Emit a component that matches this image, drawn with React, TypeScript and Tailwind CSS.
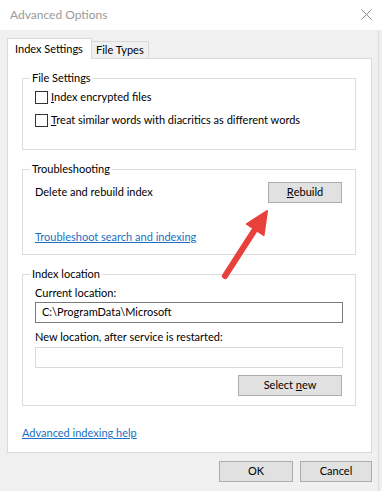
import React from 'react';

const font = "font-['Lato','Open_Sans',sans-serif]";

function Checkbox({ children }: { children: React.ReactNode }) {
  return (
    <label className="flex h-[20px] items-center">
      <span className="h-[13px] w-[13px] shrink-0 border border-[#333333] bg-white" />
      <span className="ml-[3px] whitespace-nowrap">{children}</span>
    </label>
  );
}

function Button({ children, className }: { children: React.ReactNode; className?: string }) {
  return (
    <button
      className={
        'flex h-[21px] items-center justify-center whitespace-pre border border-[#adadad] bg-[#e1e1e1] text-black ' +
        (className ?? '')
      }
    >
      {children}
    </button>
  );
}

function Group({ title, children, className }: { title: string; children: React.ReactNode; className?: string }) {
  return (
    <fieldset className={'ml-[14px] mr-[15px] border border-[#dcdcdc] px-[12px] ' + (className ?? '')}>
      <legend className="ml-[-5px] h-[16px] px-[2px] leading-[16px]">{title}</legend>
      {children}
    </fieldset>
  );
}

export default function App() {
  return (
    <div className={`relative h-[491px] w-[382px] overflow-hidden bg-[#f0f0f0] text-[11px] text-black ${font}`}>
      {/* title bar */}
      <div className="flex h-[30px] items-center justify-between bg-white pl-[10px] pr-[10px]">
        <span className="text-[12px] text-[#9a9a9a]">Advanced Options</span>
        <svg width="11" height="11" viewBox="0 0 11 11" className="mb-[1px]">
          <path d="M0.5 0.5L10.5 10.5M10.5 0.5L0.5 10.5" stroke="#8a8a8a" strokeWidth="1" fill="none" />
        </svg>
      </div>

      {/* tabs */}
      <div className="flex h-[28px] items-end whitespace-nowrap pl-[7px] pt-[8px]">
        <div className="relative z-10 -mb-px flex h-[21px] w-[85px] items-center border border-b-0 border-[#d9d9d9] bg-white pl-[7px]">
          Index Settings
        </div>
        <div className="flex h-[17px] w-[57px] items-center border-t border-r border-[#d9d9d9] bg-[#f0f0f0] pl-[4px]">
          File Types
        </div>
      </div>

      {/* panel */}
      <div className="ml-[7px] mr-[10px] flex h-[395px] flex-col border border-[#d9d9d9] bg-white pt-[11px]">
        <Group title="File Settings" className="pb-[19px]">
          <div className="flex flex-col gap-[3px] pt-[1px]">
            <Checkbox>
              <u>I</u>ndex encrypted files
            </Checkbox>
            <Checkbox>
              <u>T</u>reat similar words with diacritics as different words
            </Checkbox>
          </div>
        </Group>

        <Group title="Troubleshooting" className="mt-[11px] pb-[9px]">
          <div className="mt-[5px] flex h-[21px] items-center justify-between pr-[1px]">
            <span>Delete and rebuild index</span>
            <Button className="w-[74px]">
              <u>R</u>ebuild
            </Button>
          </div>
          <a className="mt-[26px] block h-[16px] leading-[16px] text-[#1a6fc4] underline">
            Troubleshoot search and indexing
          </a>
        </Group>

        <Group title="Index location" className="mt-[11px] pb-[9px]">
          <div className="mt-[3px] h-[16px] leading-[16px]">Current location:</div>
          <div className="mt-[1px] flex h-[21px] items-center border border-[#7a7a7a] bg-white pl-[6px]">
            C:\ProgramData\Microsoft
          </div>
          <div className="mt-[6px] h-[16px] leading-[16px]">New location, after service is restarted:</div>
          <div className="mt-[2px] h-[21px] border border-[#d9d9d9] bg-white" />
          <div className="mt-[7px] flex justify-end pr-[1px]">
            <Button className="w-[104px]">
              {'Select '}
              <u>n</u>
              {'ew'}
            </Button>
          </div>
        </Group>

        <a className="ml-[14px] mt-[19px] block h-[16px] self-start leading-[16px] text-[#1a6fc4] underline">
          Advanced indexing help
        </a>
      </div>

      {/* dialog buttons */}
      <div className="mt-[8px] flex justify-end gap-[7px] pr-[10px]">
        <Button className="w-[74px]">OK</Button>
        <Button className="w-[72px]">Cancel</Button>
      </div>

      <div className="absolute right-[3px] top-[30px] h-[461px] w-px bg-[#dadada]" />

      {/* annotation arrow */}
      <svg className="pointer-events-none absolute left-0 top-0" width="382" height="491">
        <line x1="225" y1="276" x2="254" y2="231" stroke="#e8413c" strokeWidth="6" strokeLinecap="round" />
        <polygon points="267,211 263.6,235 246.8,224" fill="#e8413c" stroke="#e8413c" strokeWidth="2" strokeLinejoin="round" />
      </svg>
    </div>
  );
}
